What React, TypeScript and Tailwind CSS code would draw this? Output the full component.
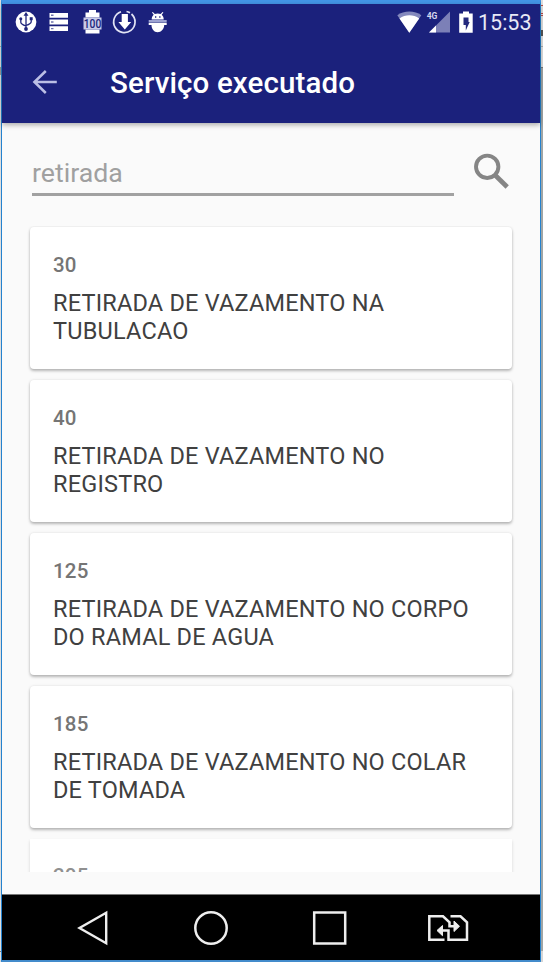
import React from 'react';

const services = [
  { code: '30', lines: ['RETIRADA DE VAZAMENTO NA', 'TUBULACAO'] },
  { code: '40', lines: ['RETIRADA DE VAZAMENTO NO', 'REGISTRO'] },
  { code: '125', lines: ['RETIRADA DE VAZAMENTO NO CORPO', 'DO RAMAL DE AGUA'] },
  { code: '185', lines: ['RETIRADA DE VAZAMENTO NO COLAR', 'DE TOMADA'] },
];

function NotificationIcons() {
  return (
    <svg className="block" width="160" height="32" viewBox="10 6 160 32" fill="none">
      {/* usb */}
      <circle cx="26" cy="22" r="10.4" fill="#fff" />
      <path d="M26 14v15M20.8 19v3.2c0 1.6 1 2.3 5.2 3.8M31.2 18.500v3.200c0 1.600-1 2.300-5.200 3.800" stroke="#20267c" strokeWidth="1.3" />
      <path d="M26 12l-2.500 3.700h5z" fill="#20267c" />
      <circle cx="26" cy="29" r="1.900" fill="#20267c" />
      <circle cx="20.800" cy="18.800" r="1.500" fill="#20267c" />
      <path d="M29.700 17.200h3v3h-3z" fill="#20267c" />
      {/* storage */}
      <path d="M49.500 13H68v4.800H49.500zM49.500 19.600H68v4.800H49.500zM49.500 26.200H68V31H49.500z" fill="#fff" />
      <path d="M51 15.300h2.500M51 22h2.500M51 28.600h2.500" stroke="#7075ad" strokeWidth="1.400" />
      {/* battery level */}
      <path d="M89 10h7v2.500h3.500v5h-14v-5H89zM85.500 29.500h14v4h-14z" fill="#fff" />
      <path d="M83.500 17.500h18v12h-18z" fill="#c9cce8" />
      <text x="92.500" y="28" textAnchor="middle" fontSize="12.500" fontWeight="500" fontFamily="Roboto, sans-serif" fill="#20267c" textLength="17.500" lengthAdjust="spacingAndGlyphs">100</text>
      {/* download in progress */}
      <path d="M121 11.800A10.700 10.700 0 1 0 131.500 14M126.500 11.500a10.700 10.700 0 0 1 3.500 1.200" stroke="#e2e4f4" strokeWidth="1.700" />
      <path d="M121.700 14h6.200v8h3.300l-6.400 7.500-6.400-7.500h3.300z" fill="#fff" />
      {/* android debugging */}
      <path d="M151.700 19.500c0-2 .7-3.600 2-4.700L152 12.500l.8-.6 2 2.100c1.700-.7 4-.7 5.800 0l2-2.100.8.600-1.700 2.300c1.300 1.100 2 2.700 2 4.700z" fill="#fff" />
      <path d="M148.700 20h18v2.300h-18z" fill="#9da3d2" />
      <path d="M148.700 22.700h18V25h-2.500c0 4-3 7.200-6.600 7.200S151.500 29 151.500 25h-2.800z" fill="#fff" />
      <path d="M155 17h1.300M159.200 17h1.300" stroke="#20267c" strokeWidth="1.300" />
    </svg>
  );
}

function SystemIcons() {
  return (
    <svg className="block" width="80" height="32" viewBox="396 6 80 32">
      {/* wifi */}
      <path d="M397.300 15.300c6.500-5 17.500-5 24 0L409.300 32.700z" fill="#8489bd" />
      <path d="M399.500 18.500c5.700-4.300 14-4.300 19.700 0l-9.900 14.200z" fill="#fff" />
      {/* mobile signal */}
      <path d="M450 11.500v21h-21z" fill="#7c80b7" />
      <path d="M436 25.500v7h-7z" fill="#fff" />
      <text x="426.800" y="18.600" fontSize="8.500" fontWeight="700" fontFamily="Roboto, sans-serif" fill="#d5d7ee" textLength="10.500">4G</text>
      {/* charging battery */}
      <path d="M463 11.500h6v2h3.700v19.200h-13.500V13.500h3.800z" fill="#fff" />
      <path d="M463.500 17.500h5v4.500h1.200l-3.900 8.500v-5.500h-2.300z" fill="#23297d" />
    </svg>
  );
}

function Header() {
  return (
    <header className="relative z-10 h-[119px] shrink-0 bg-[#1b217c] text-white shadow-[0_2px_5px_rgba(0,0,0,0.32)]">
      <div className="flex h-[38px] items-start justify-between pl-2 pr-[9px] pt-[2px]">
        <NotificationIcons />
        <div className="flex">
          <SystemIcons />
          <span className="ml-[2px] mt-[1px] w-[53px] whitespace-nowrap text-[21.500px] leading-[32px] text-[#e8e9f6]">15:53</span>
        </div>
      </div>
      <div className="flex h-[81px] items-center pl-[30px]">
        <svg width="26" height="26" viewBox="0 0 26 26" fill="none" stroke="#bbbfe5" strokeWidth="2.500" className="mb-[1px]">
          <path d="M13.800 2L2.400 13l11.400 11M2.400 13h22.400" />
        </svg>
        <h1 className="ml-[52px] whitespace-nowrap text-[29.500px] font-medium leading-[40px] tracking-[0.120px]">Serviço executado</h1>
      </div>
    </header>
  );
}

function SearchBar() {
  return (
    <div className="flex h-[103px] shrink-0 pl-[30px] pr-[29px] pt-[28px]">
      <div className="h-[45px] w-[422px] border-b-[3px] border-[#a1a1a1] pt-[2px] text-[26.700px] leading-[40px] text-[#a0a0a0]">
        <span>retirada</span>
      </div>
      <svg className="ml-[18px] mt-[1px]" width="39" height="39" viewBox="0 0 39 39" fill="none" stroke="#858585">
        <circle cx="15.200" cy="14.800" r="11.200" strokeWidth="3.900" />
        <path d="M23.500 23.500L35.200 35" strokeWidth="4.700" />
      </svg>
    </div>
  );
}

function ServiceCard({ code, lines }: { code: string; lines: string[] }) {
  return (
    <article className="h-[142px] shrink-0 rounded-[4px] bg-white px-[23px] pt-[24px] shadow-[0_2px_3px_rgba(0,0,0,0.26),0_0_3px_rgba(0,0,0,0.1)]">
      <p className="text-[20.500px] font-medium leading-[28px] tracking-[0.200px] text-[#757575]">{code}</p>
      <div className="mt-[10px] text-[23.500px] leading-[28px] tracking-[0.200px] text-[#404040]">
        {lines.map((line) => (
          <p key={line} className="whitespace-nowrap">{line}</p>
        ))}
      </div>
    </article>
  );
}

function NavigationBar() {
  return (
    <nav className="flex h-[66px] shrink-0 items-center border-t border-[#777] bg-black pl-[75px]">
      <svg width="32" height="36" viewBox="0 0 32 36" fill="none" stroke="#eee" strokeWidth="2.400">
        <path d="M29.200 2.800v30.400L2.500 18z" />
      </svg>
      <svg className="ml-[84px]" width="36" height="36" viewBox="0 0 36 36" fill="none" stroke="#eee" strokeWidth="2.500">
        <circle cx="18" cy="18" r="15.700" />
      </svg>
      <svg className="ml-[83px]" width="36" height="36" viewBox="0 0 36 36" fill="none" stroke="#eee" strokeWidth="2.500">
        <path d="M2.200 2.500h31v31h-31z" />
      </svg>
      <svg className="ml-[79px]" width="42" height="30" viewBox="0 0 42 30" fill="none" stroke="#eee" strokeWidth="2.500">
        <path d="M17.500 26.700H2.300V3.300H16l6.500 6v4h6M23.500 3.300h10l6.500 6v17.400H21.500V17.500H14" />
        <path d="M27 8l5.500 5.300-5.500 5.200zM15.500 12.500L10 17.500l5.500 5.200z" fill="#eee" strokeWidth="1" />
      </svg>
    </nav>
  );
}

export default function App() {
  return (
    <div className="flex h-[962px] w-[543px] overflow-hidden font-['Roboto',sans-serif]">
      <div className="flex w-px shrink-0 flex-col bg-[#dedede]">
        <div className="h-[46px]" />
        <div className="h-px bg-[#aaa]" />
        <div className="h-[20px]" />
        <div className="h-[8px] bg-[#9c9c9c]" />
        <div className="h-[876px]" />
        <div className="h-px bg-[#777]" />
      </div>
      <main className="flex w-[540px] shrink-0 flex-col border-x border-b-2 border-t-4 border-x-[#2582ce] border-b-[#438bcb] border-t-[#4395e6] bg-[#fafafa]">
        <Header />
        <SearchBar />
        <section className="flex h-[646px] shrink-0 flex-col gap-[11px] overflow-hidden px-[28px] pt-[1px]">
          {services.map((service) => (
            <ServiceCard key={service.code} {...service} />
          ))}
          <article className="h-[142px] shrink-0 bg-white px-[23px] pt-[23px] shadow-[0_2px_3px_rgba(0,0,0,0.15)]">
            <p className="text-[20.500px] font-medium leading-[28px] tracking-[0.200px] text-[#909090]">205</p>
          </article>
        </section>
        <div className="h-[22px] shrink-0" />
        <NavigationBar />
      </main>
      <div className="flex w-[2px] shrink-0 flex-col bg-[#a0a5a5]">
        <div className="h-[5px] bg-[#ddd]" />
        <div className="h-px bg-[#b84a4a]" />
        <div className="h-[7px] bg-[#ddd]" />
        <div className="h-px bg-[#b84a4a]" />
        <div className="h-px bg-[#ddd]" />
        <div className="h-px bg-[#b84a4a]" />
        <div className="h-[14px] bg-[#ddd]" />
        <div className="h-[6px] bg-[#555]" />
        <div className="h-[10px] bg-[#ddd]" />
        <div className="h-px bg-[#aaa]" />
        <div className="h-[20px] bg-[#ddd]" />
        <div className="h-px bg-[#777]" />
        <div className="h-[883px]" />
        <div className="h-[11px] bg-[#d5d5d5]" />
      </div>
    </div>
  );
}
